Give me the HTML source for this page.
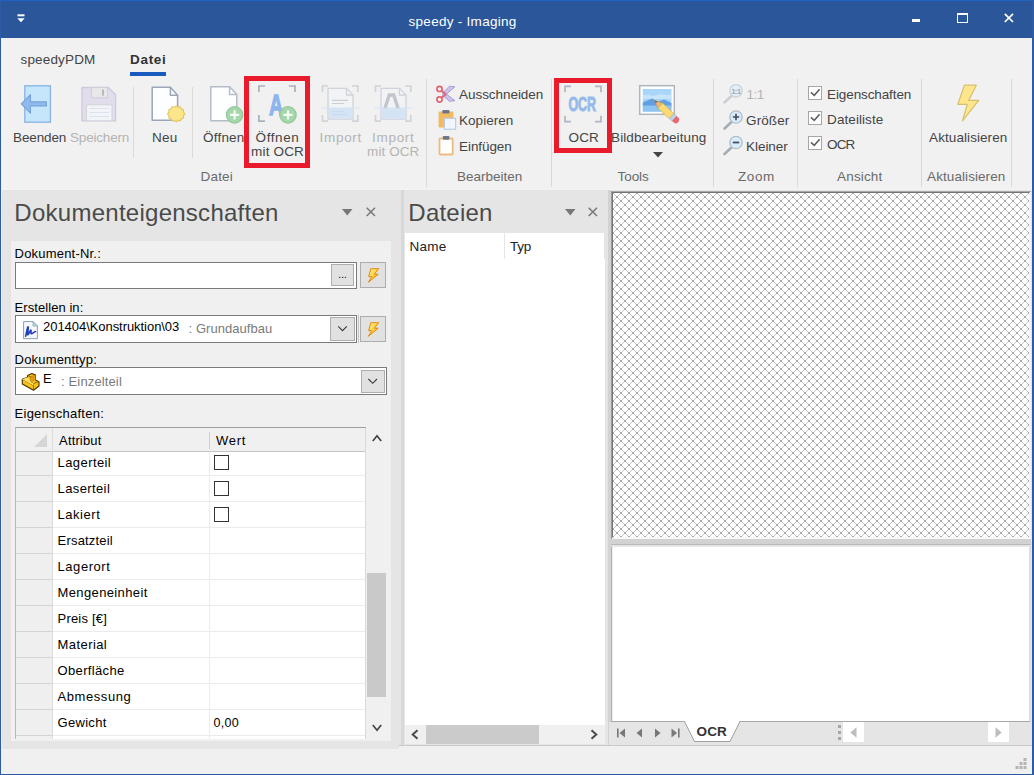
<!DOCTYPE html>
<html lang="de"><head><meta charset="utf-8"><title>speedy - Imaging</title>
<style>
html,body{margin:0;padding:0}
body{width:1034px;height:775px;position:relative;overflow:hidden;background:#f0f0f0;font-family:"Liberation Sans",sans-serif}
.a{position:absolute;box-sizing:border-box}
.t{position:absolute;white-space:pre}
svg{position:absolute;overflow:visible}
</style></head><body>
<!-- title bar -->
<!-- ribbon -->
<div class="a" style="left:0;top:38px;width:1034px;height:152px;background:#f1f1f1"></div>
<div class="a" style="left:130px;top:72px;width:36px;height:4px;background:#185abd"></div>
<div class="a" style="left:0;top:0;width:1034px;height:38.400px;background:#2b579a"></div>
<div class="a" style="left:0;top:0;width:1034px;height:1.300px;background:#1f62c4"></div>
<!-- docking area bg -->
<div class="a" style="left:0;top:190px;width:1034px;height:559px;background:#e5e5e5"></div>
<div class="a" style="left:0;top:189px;width:1034px;height:1px;background:#f4f4f4"></div>
<!-- ribbon separators -->
<div class="a" style="left:133px;top:87px;width:1px;height:71px;background:#dadada"></div>
<div class="a" style="left:192px;top:87px;width:1px;height:71px;background:#dadada"></div>
<div class="a" style="left:426.300px;top:79px;width:1px;height:108px;background:#d8d8d8"></div>
<div class="a" style="left:551.300px;top:79px;width:1px;height:108px;background:#d8d8d8"></div>
<div class="a" style="left:713.300px;top:79px;width:1px;height:108px;background:#d8d8d8"></div>
<div class="a" style="left:797px;top:79px;width:1px;height:108px;background:#d8d8d8"></div>
<div class="a" style="left:920.500px;top:79px;width:1px;height:108px;background:#d8d8d8"></div>
<div class="a" style="left:1011px;top:79px;width:1px;height:108px;background:#d8d8d8"></div>
<!-- red highlight rects -->
<div class="a" style="left:244px;top:76px;width:66px;height:92px;border:5px solid #e81a2c"></div>
<div class="a" style="left:554px;top:78px;width:58px;height:75px;border:5px solid #e81a2c"></div>
<!-- ribbon checkboxes -->
<div class="a" style="left:808.200px;top:86.3px;width:13.600px;height:13.400px;border:1px solid #a6a6a6;background:#fff"></div>
<div class="a" style="left:808.200px;top:111.3px;width:13.600px;height:13.400px;border:1px solid #a6a6a6;background:#fff"></div>
<div class="a" style="left:808.200px;top:136.3px;width:13.600px;height:13.400px;border:1px solid #a6a6a6;background:#fff"></div>
<svg style="left:808.200px;top:86.3px" width="14" height="14"><path d="M2.900 6.300L6.300 9.300L11.600 3.300" fill="none" stroke="#606060" stroke-width="1.600"/></svg>
<svg style="left:808.200px;top:111.3px" width="14" height="14"><path d="M2.900 6.300L6.300 9.300L11.600 3.300" fill="none" stroke="#606060" stroke-width="1.600"/></svg>
<svg style="left:808.200px;top:136.3px" width="14" height="14"><path d="M2.900 6.300L6.300 9.300L11.600 3.300" fill="none" stroke="#606060" stroke-width="1.600"/></svg>
<!-- Bildbearbeitung dropdown arrow -->
<svg style="left:653px;top:152px" width="10" height="6"><path d="M0 0H10L5 5.5Z" fill="#444"/></svg>

<!-- LEFT PANEL -->
<div class="a" style="left:11px;top:241px;width:380px;height:500px;background:#f0f0f0"></div>
<div class="a" style="left:401px;top:190px;width:3px;height:555px;background:#d6d8da"></div>
<svg style="left:342px;top:209px" width="11" height="7"><path d="M0 0H10.5L5.25 6.5Z" fill="#777"/></svg>
<svg style="left:366px;top:207px" width="10" height="10"><path d="M0.7 0.7L9 9M9 0.7L0.7 9" stroke="#777" stroke-width="1.5" fill="none"/></svg>
<!-- doc nr input -->
<div class="a" style="left:15px;top:262px;width:342px;height:27px;border:1px solid #7a7a7a;background:#fff"></div>
<div class="a" style="left:331.200px;top:264px;width:22.800px;height:22px;border:1px solid #adadad;background:#e1e1e1"></div>
<div class="a" style="left:360px;top:262px;width:26px;height:26px;border:1px solid #adadad;background:#e1e1e1"></div>
<!-- erstellen in combo -->
<div class="a" style="left:15px;top:315px;width:342px;height:28px;border:1px solid #7a7a7a;background:#fff"></div>
<div class="a" style="left:330px;top:317px;width:25px;height:24px;border:1px solid #adadad;background:#e1e1e1"></div>

<div class="a" style="left:360px;top:316px;width:26px;height:26px;border:1px solid #adadad;background:#e1e1e1"></div>
<div class="a" style="left:358px;top:315px;width:1px;height:28px;background:#c6c6c6"></div>
<!-- dokumenttyp combo -->
<div class="a" style="left:15px;top:367px;width:372px;height:28px;border:1px solid #7a7a7a;background:#fff"></div>
<div class="a" style="left:360.500px;top:369.500px;width:24.500px;height:23px;border:1px solid #adadad;background:#e1e1e1"></div>

<svg style="left:0;top:0" width="400" height="400"><path d="M338.200 326.300L342.500 330.600L346.800 326.300" stroke="#3c3c3c" stroke-width="1.150" fill="none"/><path d="M368.400 379L372.700 383.300L377 379" stroke="#3c3c3c" stroke-width="1.150" fill="none"/></svg>
<!-- grid -->
<div class="a" style="left:15px;top:427px;width:351px;height:312px;background:#fff;border-left:1px solid #b8b8b8;border-top:1px solid #a0a0a0"></div>
<div class="a" style="left:16px;top:428px;width:349px;height:24px;background:#f0f0f0;border-bottom:1.500px solid #c4c4c4"></div>
<div class="a" style="left:16px;top:452px;width:37px;height:287px;background:#efefef"></div>
<div class="a" style="left:52px;top:428px;width:1px;height:311px;background:#dcdcdc"></div>
<div class="a" style="left:209px;top:432px;width:1px;height:17px;background:#cfcfcf"></div>
<div class="a" style="left:209px;top:452px;width:1px;height:287px;background:#ececec"></div>
<div class="a" style="left:365px;top:428px;width:1px;height:311px;background:#dadada"></div>
<svg style="left:34px;top:434px" width="13" height="13"><path d="M13 0V13H0Z" fill="#d6d6d6"/></svg>
<div class="a" style="left:16px;top:475px;width:36px;height:1px;background:#d4d4d4"></div><div class="a" style="left:53px;top:475px;width:312px;height:1px;background:#ebebeb"></div>
<div class="a" style="left:16px;top:501px;width:36px;height:1px;background:#d4d4d4"></div><div class="a" style="left:53px;top:501px;width:312px;height:1px;background:#ebebeb"></div>
<div class="a" style="left:16px;top:527px;width:36px;height:1px;background:#d4d4d4"></div><div class="a" style="left:53px;top:527px;width:312px;height:1px;background:#ebebeb"></div>
<div class="a" style="left:16px;top:553px;width:36px;height:1px;background:#d4d4d4"></div><div class="a" style="left:53px;top:553px;width:312px;height:1px;background:#ebebeb"></div>
<div class="a" style="left:16px;top:579px;width:36px;height:1px;background:#d4d4d4"></div><div class="a" style="left:53px;top:579px;width:312px;height:1px;background:#ebebeb"></div>
<div class="a" style="left:16px;top:605px;width:36px;height:1px;background:#d4d4d4"></div><div class="a" style="left:53px;top:605px;width:312px;height:1px;background:#ebebeb"></div>
<div class="a" style="left:16px;top:631px;width:36px;height:1px;background:#d4d4d4"></div><div class="a" style="left:53px;top:631px;width:312px;height:1px;background:#ebebeb"></div>
<div class="a" style="left:16px;top:657px;width:36px;height:1px;background:#d4d4d4"></div><div class="a" style="left:53px;top:657px;width:312px;height:1px;background:#ebebeb"></div>
<div class="a" style="left:16px;top:683px;width:36px;height:1px;background:#d4d4d4"></div><div class="a" style="left:53px;top:683px;width:312px;height:1px;background:#ebebeb"></div>
<div class="a" style="left:16px;top:709px;width:36px;height:1px;background:#d4d4d4"></div><div class="a" style="left:53px;top:709px;width:312px;height:1px;background:#ebebeb"></div>
<div class="a" style="left:16px;top:735px;width:36px;height:1px;background:#d4d4d4"></div><div class="a" style="left:53px;top:735px;width:312px;height:1px;background:#ebebeb"></div>
<div class="a" style="left:213.500px;top:454.5px;width:15.500px;height:15.500px;border:1px solid #333;background:#fff"></div>
<div class="a" style="left:213.500px;top:480.5px;width:15.500px;height:15.500px;border:1px solid #333;background:#fff"></div>
<div class="a" style="left:213.500px;top:506.5px;width:15.500px;height:15.500px;border:1px solid #333;background:#fff"></div>
<!-- grid scrollbar -->
<div class="a" style="left:366px;top:427px;width:22px;height:312px;background:#f0f0f0"></div>
<div class="a" style="left:367px;top:573px;width:19px;height:124px;background:#c9c9c9"></div>
<svg style="left:372px;top:434px" width="10" height="8"><path d="M0.8 7L5 1.8L9.2 7" stroke="#444" stroke-width="1.7" fill="none"/></svg>
<svg style="left:372px;top:724px" width="10" height="8"><path d="M0.8 1L5 6.2L9.2 1" stroke="#444" stroke-width="1.7" fill="none"/></svg>

<!-- DATEIEN PANEL -->
<div class="a" style="left:405px;top:233px;width:200px;height:511px;background:#fff"></div>
<div class="a" style="left:504px;top:233px;width:1px;height:26px;background:#e5e5e5"></div>
<div class="a" style="left:604px;top:233px;width:1px;height:26px;background:#e5e5e5"></div>
<svg style="left:565px;top:209px" width="11" height="7"><path d="M0 0H10.5L5.25 6.5Z" fill="#777"/></svg>
<svg style="left:588px;top:207px" width="10" height="10"><path d="M0.7 0.7L9 9M9 0.7L0.7 9" stroke="#777" stroke-width="1.5" fill="none"/></svg>
<div class="a" style="left:405px;top:725px;width:200px;height:19px;background:#f0f0f0"></div>
<div class="a" style="left:426px;top:725px;width:113px;height:19px;background:#cbcbcb"></div>
<svg style="left:411px;top:729px" width="8" height="11"><path d="M6.500 1.200L1.700 5.500L6.500 9.800" stroke="#4a4a4a" stroke-width="2" fill="none"/></svg>
<svg style="left:590px;top:729px" width="8" height="11"><path d="M1.500 1.200L6.300 5.500L1.500 9.800" stroke="#4a4a4a" stroke-width="2" fill="none"/></svg>

<!-- IMAGE VIEW -->
<div class="a" style="left:608px;top:190px;width:3px;height:555px;background:#d3d3d3"></div>
<div class="a" style="left:611px;top:191px;width:420px;height:348px;background:#fff;border-left:2px solid #747474;border-top:2px solid #747474;border-right:2px solid #f4f4f4;border-bottom:2px solid #f8f8f8"></div>
<div class="a" style="left:611px;top:191px;width:420px;height:1px;background:#a9a9a9"></div><div class="a" style="left:611px;top:191px;width:1px;height:348px;background:#9a9a9a"></div>
<svg style="left:613px;top:193px" width="416" height="344" shape-rendering="crispEdges"><defs><pattern id="hp" width="8" height="8" patternUnits="userSpaceOnUse"><path d="M1 1h1v1h-1zM6 1h1v1h-1zM2 2h1v1h-1zM5 2h1v1h-1zM5 5h1v1h-1zM2 5h1v1h-1zM6 6h1v1h-1zM1 6h1v1h-1z" fill="#c4c4c4"/><path d="M0 0h1v1h-1zM7 0h1v1h-1zM3 3h1v1h-1zM4 3h1v1h-1zM4 4h1v1h-1zM3 4h1v1h-1zM7 7h1v1h-1zM0 7h1v1h-1z" fill="#a8a8a8"/></pattern></defs><rect width="416" height="344" fill="url(#hp)"/></svg>
<!-- splitter -->
<div class="a" style="left:611px;top:539px;width:420px;height:6px;background:#d2d2d2;border-bottom:1px solid #b9b9b9"></div>
<!-- OCR text panel -->
<div class="a" style="left:611px;top:546px;width:420px;height:176px;background:#fff;border-left:1px solid #b2b2b2;border-top:1px solid #e6e6e6;border-right:2px solid #dedede;border-bottom:1px solid #a8a8a8"></div>
<div class="a" style="left:612px;top:547px;width:1px;height:174px;background:#ececec"></div>
<!-- tab strip -->
<div class="a" style="left:609px;top:722px;width:423px;height:23px;background:#e5e5e5"></div>

<svg style="left:684px;top:721px" width="58" height="22"><path d="M0.5 0.5L10.5 20.5H46L56 0.5" fill="#fff" stroke="#a0a0a0" stroke-width="1"/><path d="M1.5 0.5H55" stroke="#fff" stroke-width="1.4"/></svg>
<svg style="left:616px;top:728px" width="70" height="10"><g fill="#777"><rect x="1" y="0.5" width="1.6" height="9"/><path d="M9 0.5V9.5L3.5 5Z"/><path d="M26 0.5V9.5L20.5 5Z"/><path d="M39 0.5V9.5L44.5 5Z"/><path d="M55.5 0.5V9.5L61 5Z"/><rect x="62" y="0.5" width="1.6" height="9"/></g></svg>
<div class="a" style="left:838px;top:725px;width:3px;height:3px;background:#a8a8a8"></div>
<div class="a" style="left:838px;top:731px;width:3px;height:3px;background:#a8a8a8"></div>
<div class="a" style="left:838px;top:737px;width:3px;height:3px;background:#a8a8a8"></div>
<div class="a" style="left:843px;top:722px;width:21px;height:20px;background:#fff"></div>
<div class="a" style="left:988px;top:722px;width:21px;height:20px;background:#fff"></div>
<svg style="left:850px;top:727px" width="7" height="11"><path d="M6.5 0.3V10.7L0.3 5.5Z" fill="#bdbdbd"/></svg>
<svg style="left:995px;top:727px" width="7" height="11"><path d="M0.5 0.3V10.7L6.7 5.5Z" fill="#bdbdbd"/></svg>
<!-- status bar -->
<div class="a" style="left:2px;top:749px;width:1030px;height:24px;background:#f0f0f0"></div><div class="a" style="left:399px;top:745px;width:633px;height:5px;background:#f0f0f0;border-top:1px solid #cacaca"></div>
<svg style="left:1015px;top:758px" width="12" height="12"><g fill="#b4b4b4"><rect x="8.5" y="0" width="3" height="3"/><rect x="4.5" y="4" width="3" height="3"/><rect x="8.5" y="4" width="3" height="3"/><rect x="0.5" y="8" width="3" height="3"/><rect x="4.5" y="8" width="3" height="3"/><rect x="8.5" y="8" width="3" height="3"/></g></svg>
<!-- window controls -->
<div class="a" style="left:912px;top:19px;width:8px;height:3px;background:#fff"></div>
<div class="a" style="left:957px;top:13px;width:11px;height:10px;border:1.3px solid #fff;border-top-width:2.5px"></div>
<svg style="left:1004px;top:13px" width="10" height="10"><path d="M0.8 0.8L9 9M9 0.8L0.8 9" stroke="#fff" stroke-width="1.7" fill="none"/></svg>
<svg style="left:17px;top:14px" width="8" height="9"><rect x="0.5" y="0.3" width="7" height="2" fill="#fff"/><path d="M0.3 4.2H7.7L4 8.2Z" fill="#fff"/></svg>
<svg style="left:0;top:0" width="1034" height="775" viewBox="0 0 1034 775">
<!-- Beenden -->
<rect x="24.8" y="85.8" width="25.6" height="36.4" fill="#c6e6fc" stroke="#8db6e6" stroke-width="1.4"/>
<path d="M21.3 103.9L30.4 94.6V101.9H46.4V105.9H30.4V113.2Z" fill="#8fbaee" stroke="#7aa2dc" stroke-width="1.2" stroke-linejoin="round"/>
<!-- Speichern (disabled) -->
<g opacity="0.55">
<path d="M82 87.5H108.3L115.6 94.8V120.8H82Z" fill="#d6cdea" stroke="#b4aacb" stroke-width="1.3"/>
<rect x="91.5" y="87.5" width="16" height="10.3" fill="#e2e2e6" stroke="#b6b6c0" stroke-width="1.1"/>
<rect x="102" y="89.6" width="2" height="6" fill="#8c8c96"/>
<rect x="86.5" y="104.8" width="25.5" height="16" fill="#f4f7fc" stroke="#bdbdca" stroke-width="1.1"/>
<path d="M89.5 108.5H109M89.5 112.5H109M89.5 116.5H109" stroke="#c9d9ee" stroke-width="1.2"/>
</g>
<!-- Neu -->
<path d="M152.2 87.3H170.4L177.6 95.2V120.2H152.2Z" fill="#fdfeff" stroke="#9aa6b6" stroke-width="1.5" stroke-linejoin="round"/>
<path d="M170.4 87.3V95.2H177.6" fill="none" stroke="#9aa6b6" stroke-width="1.5" stroke-linejoin="round"/>
<path id="burst" d="M176.2 105.9l1.9 1.3 2.3-.4 1 2.1 2.2.8-.2 2.3 1.5 1.8-1.5 1.800.2 2.3-2.2.8-1 2.1-2.3-.4-1.900 1.300-1.900-1.300-2.300.4-1-2.100-2.200-.8.2-2.300-1.500-1.800 1.500-1.800-.2-2.300 2.200-.8 1-2.100 2.300.4z" fill="#fde58c" stroke="#e2c55e" stroke-width="1.1" stroke-linejoin="round"/>
<!-- Öffnen -->
<path d="M210.8 86.8H229.6L236.8 94.6V120.8H210.8Z" fill="#fdfeff" stroke="#b4bcc8" stroke-width="1.5" stroke-linejoin="round"/>
<path d="M229.6 86.8V94.6H236.8" fill="none" stroke="#b4bcc8" stroke-width="1.5" stroke-linejoin="round"/>
<circle cx="234.6" cy="114.9" r="8.2" fill="#a6d6ab" stroke="#90c898" stroke-width="1.2"/>
<path d="M234.6 110.3V119.5M230 114.9H239.200" stroke="#f4fbf4" stroke-width="2.1"/>
<!-- Öffnen mit OCR -->
<g fill="none" stroke="#a9b1bd" stroke-width="1.7">
<path d="M258.9 92V86H265"/><path d="M288.800 86H295V92"/><path d="M258.9 115V121.2H265"/>
</g>
<text transform="translate(268.900 114.600) scale(0.660 1)" font-family="Liberation Sans, sans-serif" font-weight="700" font-size="29.800" fill="#8cb5ee" stroke="#8cb5ee" stroke-width="1.300">A</text>
<circle cx="288" cy="114.9" r="8.2" fill="#a6d6ab" stroke="#90c898" stroke-width="1.2"/>
<path d="M288 110.3V119.5M283.400 114.9H292.600" stroke="#f4fbf4" stroke-width="2.1"/>
<!-- Import (disabled) -->
<g opacity="0.6">
<g fill="none" stroke="#b9c0cb" stroke-width="1.7">
<path d="M322.500 92V86H328"/><path d="M352 86H357.800V92"/><path d="M322.500 115V121.2H328"/><path d="M352 121.2H357.800V115"/>
</g>
<path d="M328 88.300H346.500L353 95V119.200H328Z" fill="#f3f5f9" stroke="#b9c0cb" stroke-width="1.3"/>
<path d="M346.500 88.300V95H353" fill="none" stroke="#b9c0cb" stroke-width="1.3"/>
<rect x="328.600" y="108" width="23.800" height="10.600" fill="#c4dcf6"/>
<path d="M321 108H359.500" stroke="#c4dcf6" stroke-width="1.100"/>
<path d="M332 100.300H348M332 103.500H344" stroke="#b2b8c4" stroke-width="1.200"/>
<path d="M332 111.500H344M332 114.700H348" stroke="#aecdf0" stroke-width="1.200"/>
</g>
<!-- Import mit OCR (disabled) -->
<g opacity="0.6">
<g fill="none" stroke="#b9c0cb" stroke-width="1.7">
<path d="M375.500 92V86H381"/><path d="M405 86H410.800V92"/><path d="M375.500 115V121.2H381"/><path d="M405 121.2H410.800V115"/>
</g>
<path d="M381 88.300H399.500L406 95V119.200H381Z" fill="#f3f5f9" stroke="#b9c0cb" stroke-width="1.3"/>
<path d="M399.500 88.300V95H406" fill="none" stroke="#b9c0cb" stroke-width="1.3"/>
<rect x="381.600" y="108" width="23.800" height="10.600" fill="#c4dcf6"/>
<path d="M374 108H412.500" stroke="#c4dcf6" stroke-width="1.100"/>
<path d="M385 108L389.300 95H393.700L398 108" fill="none" stroke="#a4a9b8" stroke-width="3.400"/>
</g>
<!-- scissors -->
<path d="M442.500 91L454.900 100.700L449.600 101.300L443.600 96.300Z" fill="#cfc2ea" stroke="#aa9bd3" stroke-width="1" stroke-linejoin="round"/>
<path d="M442.500 97.500L454.900 86.800L449.600 86.200L443.600 92Z" fill="#cfc2ea" stroke="#aa9bd3" stroke-width="1" stroke-linejoin="round"/>
<circle cx="439.500" cy="88.900" r="2.600" fill="none" stroke="#e16670" stroke-width="1.700"/>
<circle cx="439.500" cy="99.500" r="2.600" fill="none" stroke="#e16670" stroke-width="1.700"/>
<path d="M441.300 90.700L446 94.200M441.300 97.700L446 94.200" stroke="#e16670" stroke-width="1.800"/>
<!-- copy -->
<rect x="438.600" y="111.600" width="14.800" height="16" rx="0.8" fill="#f2bb62"/>
<rect x="442.300" y="110" width="7.200" height="3.600" rx="1" fill="#6e7788"/>
<rect x="444.300" y="118.200" width="11.400" height="11" fill="#f1f6fd" stroke="#b3c5e0" stroke-width="1"/>
<!-- paste -->
<rect x="439.500" y="138.500" width="13.200" height="16" rx="0.8" fill="#fff" stroke="#ebbc7e" stroke-width="1.800"/>
<rect x="442.800" y="136" width="6.600" height="3.700" rx="1" fill="#6e7788"/>
<!-- OCR icon -->
<g fill="none" stroke="#aeb6c2" stroke-width="1.7">
<path d="M565 92.200V86.300H571"/><path d="M595 86.300H601V92.200"/><path d="M565 115.800V121.700H571"/><path d="M595 121.700H601V115.800"/>
</g>
<text transform="translate(568.400 111) scale(0.640 1)" font-family="Liberation Sans, sans-serif" font-weight="700" font-size="19.500" fill="#94baea" stroke="#94baea" stroke-width="0.900">OCR</text>
<!-- Bildbearbeitung -->
<rect x="639.700" y="85.700" width="34.600" height="28.600" fill="#fff" stroke="#b0b5be" stroke-width="1.500"/>
<rect x="642.800" y="89" width="28.600" height="22.600" fill="#a9d5f9"/>
<path d="M642.800 95.500C648 93 652 97.500 657 95C662 93 666 96.500 671.400 94.500V99H642.800Z" fill="#c6e5fc"/>
<path d="M642.800 102.500L652 98.500L658 101.500L664 99.500L671.400 103V106.500H642.800Z" fill="#5f9fe2"/>
<rect x="642.800" y="105.500" width="28.600" height="6.100" fill="#8ec3f2"/>
<g transform="translate(654.700 100.600) rotate(42.500)">
<path d="M0 0L7.500 -3.400V3.400Z" fill="#ecb777" stroke="#c99a58" stroke-width="0.800"/>
<path d="M0 0L2.600 -1.200V1.200Z" fill="#6a5a48"/>
<rect x="7.500" y="-3.400" width="15.500" height="6.800" fill="#f9da73" stroke="#d8b85a" stroke-width="0.800"/>
<rect x="23" y="-3.400" width="3.600" height="6.800" fill="#b9d2ea" stroke="#9db8d4" stroke-width="0.600"/>
<path d="M26.600 -3.400H28.500A3.400 3.400 0 0 1 28.500 3.400H26.600Z" fill="#e9686f"/>
</g>
<!-- zoom icons -->
<g opacity="0.5">
<path d="M731.200 96.200L724.500 102.400" stroke="#a4acb4" stroke-width="2.600" stroke-linecap="round"/>
<circle cx="736" cy="90.800" r="6.200" fill="#d7ecfc" stroke="#a9b5c1" stroke-width="1.300"/>
<text x="731.200" y="93.600" font-family="Liberation Sans, sans-serif" font-weight="700" font-size="8" fill="#5a6270" letter-spacing="-0.800">1:1</text>
</g>
<path d="M731.200 122.300L724.500 128.500" stroke="#a4acb4" stroke-width="2.600" stroke-linecap="round"/>
<circle cx="736" cy="117" r="6.200" fill="#d7ecfc" stroke="#b1bcc8" stroke-width="1.300"/>
<path d="M736 113.800V120.200M732.800 117H739.200" stroke="#414956" stroke-width="1.600"/>
<path d="M731.200 147.800L724.500 154" stroke="#a4acb4" stroke-width="2.600" stroke-linecap="round"/>
<circle cx="736" cy="142.500" r="6.200" fill="#d7ecfc" stroke="#b1bcc8" stroke-width="1.300"/>
<path d="M732.800 142.500H739.200" stroke="#414956" stroke-width="1.700"/>
<!-- Aktualisieren lightning -->
<path d="M964.400 85.200H976.300L968.600 100.400H978.700L962.500 120.800L967.300 104.300H957.800Z" fill="#fde68b" stroke="#d9be70" stroke-width="1.200" stroke-linejoin="round"/>
<!-- small lightnings -->
<defs><linearGradient id="lg" x1="0" y1="0" x2="1" y2="1"><stop offset="0" stop-color="#fff0a0"/><stop offset="0.500" stop-color="#ffd23c"/><stop offset="1" stop-color="#f09a18"/></linearGradient></defs>
<path id="sl" d="M370.800 268.700H378.700L374.300 274.200H378.200L368.400 282.300L371.800 276.600H368.700Z" fill="url(#lg)" stroke="#dd8a12" stroke-width="1" stroke-linejoin="round"/>
<path d="M370.800 268.700H378.700L374.300 274.200H378.200L368.400 282.300L371.800 276.600H368.700Z" transform="translate(0 54)" fill="url(#lg)" stroke="#dd8a12" stroke-width="1" stroke-linejoin="round"/>
<!-- doc icon -->
<path d="M23.600 321.600H33L37.400 326V338.700H23.600Z" fill="#f5f7fb" stroke="#8e9db5" stroke-width="1"/>
<path d="M33 321.600V326H37.400Z" fill="#bfe0e4" stroke="#7fa8b8" stroke-width="0.800"/>
<path d="M25.600 336.300C26.800 332 27.300 326.300 28.200 326.800C29.200 327.400 26.600 335 27.800 334.800C29.200 334.500 29.800 329.600 30.900 330C31.800 330.400 30.200 333.800 31.300 333.700C32.600 333.500 33.800 332 35.600 331.600" fill="none" stroke="#1f3fba" stroke-width="1.500" stroke-linecap="round"/>
<!-- part icon -->
<path d="M27.500 375.500L32 373.500L35.500 375V380L39 381.700V386L33.500 390.300L22.300 384V379.300L27.500 377.200Z" fill="#f4c21c" stroke="#4a3200" stroke-width="1.100" stroke-linejoin="round"/>
<path d="M27.500 375.500L31 377V382.300L33.500 383.500L39 381.700M31 377L35.500 375M33.500 383.500V390.300M22.300 379.300L33.500 385.500" fill="none" stroke="#8a5a00" stroke-width="0.800"/>
<path d="M31 377L35.500 375V380L33.500 381.300L31 382.300Z" fill="#e09a10"/>
<path d="M22.300 379.300L27.500 377.200L31 382.300L33.500 383.500V385.500Z" fill="#ffe066"/>
</svg>

<span class="t" style="left:408.56px;top:13.00px;font-size:13.5px;line-height:18px;letter-spacing:0.279px;color:#ffffff;font-weight:400">speedy - Imaging</span>
<span class="t" style="left:20.55px;top:51.00px;font-size:13.5px;line-height:18px;letter-spacing:0.151px;color:#444444;font-weight:400">speedyPDM</span>
<span class="t" style="left:130.06px;top:51.00px;font-size:13.5px;line-height:18px;letter-spacing:0.685px;color:#333;font-weight:700">Datei</span>
<span class="t" style="left:13.05px;top:129.00px;font-size:13.5px;line-height:18px;letter-spacing:-0.135px;color:#444444;font-weight:400">Beenden</span>
<span class="t" style="left:70.06px;top:129.00px;font-size:13.5px;line-height:18px;letter-spacing:-0.193px;color:#b4b4b4;font-weight:400">Speichern</span>
<span class="t" style="left:152.06px;top:129.00px;font-size:13.5px;line-height:18px;letter-spacing:0.245px;color:#444444;font-weight:400">Neu</span>
<span class="t" style="left:203.06px;top:129.00px;font-size:13.5px;line-height:18px;letter-spacing:0.192px;color:#444444;font-weight:400">Öffnen</span>
<span class="t" style="left:255.56px;top:129.00px;font-size:13.5px;line-height:18px;letter-spacing:0.592px;color:#444444;font-weight:400">Öffnen</span>
<span class="t" style="left:251.06px;top:143.00px;font-size:13.5px;line-height:18px;letter-spacing:0.168px;color:#444444;font-weight:400">mit OCR</span>
<span class="t" style="left:319.56px;top:129.00px;font-size:13.5px;line-height:18px;letter-spacing:0.698px;color:#b4b4b4;font-weight:400">Import</span>
<span class="t" style="left:372.06px;top:129.00px;font-size:13.5px;line-height:18px;letter-spacing:0.698px;color:#b4b4b4;font-weight:400">Import</span>
<span class="t" style="left:367.06px;top:143.00px;font-size:13.5px;line-height:18px;letter-spacing:0.084px;color:#b4b4b4;font-weight:400">mit OCR</span>
<span class="t" style="left:200.56px;top:168.00px;font-size:13.5px;line-height:18px;letter-spacing:0.185px;color:#6a6a6a;font-weight:400">Datei</span>
<span class="t" style="left:459.06px;top:86.00px;font-size:13.5px;line-height:18px;letter-spacing:-0.051px;color:#444444;font-weight:400">Ausschneiden</span>
<span class="t" style="left:459.06px;top:112.00px;font-size:13.5px;line-height:18px;letter-spacing:0.030px;color:#444444;font-weight:400">Kopieren</span>
<span class="t" style="left:459.06px;top:138.00px;font-size:13.5px;line-height:18px;letter-spacing:-0.077px;color:#444444;font-weight:400">Einfügen</span>
<span class="t" style="left:457.06px;top:168.00px;font-size:13.5px;line-height:18px;letter-spacing:-0.006px;color:#6a6a6a;font-weight:400">Bearbeiten</span>
<span class="t" style="left:568.55px;top:129.00px;font-size:13.5px;line-height:18px;letter-spacing:0.127px;color:#444444;font-weight:400">OCR</span>
<span class="t" style="left:611.05px;top:129.00px;font-size:13.5px;line-height:18px;letter-spacing:0.102px;color:#444444;font-weight:400">Bildbearbeitung</span>
<span class="t" style="left:617.55px;top:168.00px;font-size:13.5px;line-height:18px;letter-spacing:-0.065px;color:#6a6a6a;font-weight:400">Tools</span>
<span class="t" style="left:746.55px;top:86.00px;font-size:13.5px;line-height:18px;letter-spacing:-0.513px;color:#b4b4b4;font-weight:400">1:1</span>
<span class="t" style="left:746.05px;top:112.00px;font-size:13.5px;line-height:18px;letter-spacing:0.098px;color:#444444;font-weight:400">Größer</span>
<span class="t" style="left:746.05px;top:138.00px;font-size:13.5px;line-height:18px;letter-spacing:-0.046px;color:#444444;font-weight:400">Kleiner</span>
<span class="t" style="left:738.05px;top:168.00px;font-size:13.5px;line-height:18px;letter-spacing:0.580px;color:#6a6a6a;font-weight:400">Zoom</span>
<span class="t" style="left:827.05px;top:86.00px;font-size:13.5px;line-height:18px;letter-spacing:-0.109px;color:#444444;font-weight:400">Eigenschaften</span>
<span class="t" style="left:827.05px;top:111.00px;font-size:13.5px;line-height:18px;letter-spacing:0.080px;color:#444444;font-weight:400">Dateiliste</span>
<span class="t" style="left:827.05px;top:136.00px;font-size:13.5px;line-height:18px;letter-spacing:-0.873px;color:#444444;font-weight:400">OCR</span>
<span class="t" style="left:837.05px;top:168.00px;font-size:13.5px;line-height:18px;letter-spacing:0.162px;color:#6a6a6a;font-weight:400">Ansicht</span>
<span class="t" style="left:929.05px;top:129.00px;font-size:13.5px;line-height:18px;letter-spacing:0.080px;color:#444444;font-weight:400">Aktualisieren</span>
<span class="t" style="left:927.05px;top:168.00px;font-size:13.5px;line-height:18px;letter-spacing:0.080px;color:#6a6a6a;font-weight:400">Aktualisieren</span>
<span class="t" style="left:14.32px;top:197.00px;font-size:24px;line-height:31px;letter-spacing:0.264px;color:#4a4a4a;font-weight:400">Dokumenteigenschaften</span>
<span class="t" style="left:408.32px;top:197.00px;font-size:24px;line-height:31px;letter-spacing:0.231px;color:#4a4a4a;font-weight:400">Dateien</span>
<span class="t" style="left:14.59px;top:245.00px;font-size:13px;line-height:17px;letter-spacing:0.198px;color:#000000;font-weight:400">Dokument-Nr.:</span>
<span class="t" style="left:14.59px;top:299.00px;font-size:13px;line-height:17px;letter-spacing:0.064px;color:#000000;font-weight:400">Erstellen in:</span>
<span class="t" style="left:43.09px;top:318.00px;font-size:13px;line-height:17px;letter-spacing:-0.054px;color:#000000;font-weight:400">201404\Konstruktion\03</span>
<span class="t" style="left:188.59px;top:320.00px;font-size:13px;line-height:17px;letter-spacing:0.047px;color:#7a7a7a;font-weight:400">: Grundaufbau</span>
<span class="t" style="left:14.59px;top:351.00px;font-size:13px;line-height:17px;letter-spacing:0.181px;color:#000000;font-weight:400">Dokumenttyp:</span>
<span class="t" style="left:43.09px;top:370.00px;font-size:13px;line-height:17px;letter-spacing:0.018px;color:#000000;font-weight:400">E</span>
<span class="t" style="left:61.09px;top:373.00px;font-size:13px;line-height:17px;letter-spacing:0.131px;color:#7a7a7a;font-weight:400">: Einzelteil</span>
<span class="t" style="left:14.59px;top:405.00px;font-size:13px;line-height:17px;letter-spacing:0.244px;color:#000000;font-weight:400">Eigenschaften:</span>
<span class="t" style="left:338.30px;top:268.00px;font-size:10px;line-height:13px;letter-spacing:0.128px;color:#000000;font-weight:400">...</span>
<span class="t" style="left:59.09px;top:432.00px;font-size:13px;line-height:17px;letter-spacing:0.143px;color:#000000;font-weight:400">Attribut</span>
<span class="t" style="left:216.09px;top:432.00px;font-size:13px;line-height:17px;letter-spacing:0.657px;color:#000000;font-weight:400">Wert</span>
<span class="t" style="left:57.59px;top:454.00px;font-size:13px;line-height:17px;letter-spacing:0.414px;color:#000000;font-weight:400">Lagerteil</span>
<span class="t" style="left:57.59px;top:480.00px;font-size:13px;line-height:17px;letter-spacing:0.381px;color:#000000;font-weight:400">Laserteil</span>
<span class="t" style="left:57.59px;top:506.00px;font-size:13px;line-height:17px;letter-spacing:0.526px;color:#000000;font-weight:400">Lakiert</span>
<span class="t" style="left:57.59px;top:532.00px;font-size:13px;line-height:17px;letter-spacing:0.191px;color:#000000;font-weight:400">Ersatzteil</span>
<span class="t" style="left:57.59px;top:558.00px;font-size:13px;line-height:17px;letter-spacing:0.538px;color:#000000;font-weight:400">Lagerort</span>
<span class="t" style="left:57.59px;top:584.00px;font-size:13px;line-height:17px;letter-spacing:0.366px;color:#000000;font-weight:400">Mengeneinheit</span>
<span class="t" style="left:57.59px;top:610.00px;font-size:13px;line-height:17px;letter-spacing:0.188px;color:#000000;font-weight:400">Preis [€]</span>
<span class="t" style="left:57.59px;top:636.00px;font-size:13px;line-height:17px;letter-spacing:0.420px;color:#000000;font-weight:400">Material</span>
<span class="t" style="left:57.59px;top:662.00px;font-size:13px;line-height:17px;letter-spacing:0.344px;color:#000000;font-weight:400">Oberfläche</span>
<span class="t" style="left:57.59px;top:688.00px;font-size:13px;line-height:17px;letter-spacing:0.567px;color:#000000;font-weight:400">Abmessung</span>
<span class="t" style="left:57.59px;top:714.00px;font-size:13px;line-height:17px;letter-spacing:0.287px;color:#000000;font-weight:400">Gewicht</span>
<span class="t" style="left:213.62px;top:715.00px;font-size:12.5px;line-height:16px;letter-spacing:0.260px;color:#000000;font-weight:400">0,00</span>
<span class="t" style="left:409.56px;top:238.00px;font-size:13.5px;line-height:18px;letter-spacing:0.246px;color:#222;font-weight:400">Name</span>
<span class="t" style="left:510.06px;top:238.00px;font-size:13.5px;line-height:18px;letter-spacing:-0.255px;color:#222;font-weight:400">Typ</span>
<span class="t" style="left:696.55px;top:723.00px;font-size:13.5px;line-height:18px;letter-spacing:0.127px;color:#333;font-weight:700">OCR</span>
<!-- window border -->
<div class="a" style="left:0;top:0;width:1px;height:775px;background:#2d5ca6"></div>
<div class="a" style="left:1px;top:38px;width:1px;height:735px;background:#e9f1fb"></div>
<div class="a" style="left:1032px;top:0;width:2px;height:775px;background:#2d5ca6"></div>
<div class="a" style="left:0;top:773.500px;width:1034px;height:1.500px;background:#2a5aa4"></div>
</body></html>
